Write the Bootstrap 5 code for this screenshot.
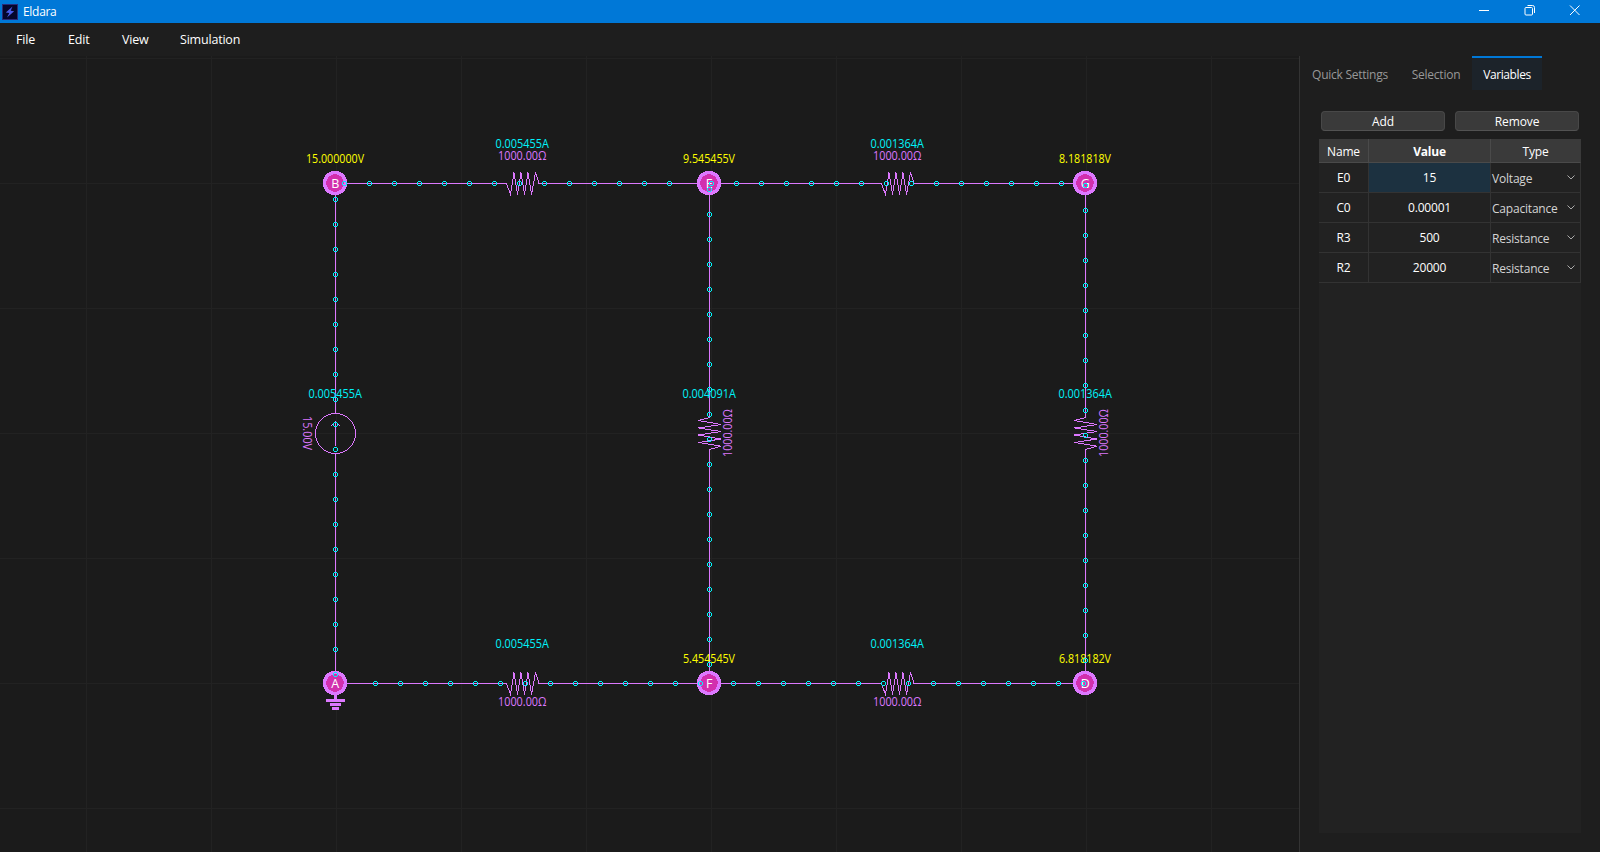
<!DOCTYPE html>
<html lang="en">
<head>
<meta charset="utf-8">
<title>Eldara</title>
<link href="https://cdn.jsdelivr.net/npm/bootstrap@5.3.0/dist/css/bootstrap.min.css" rel="stylesheet">
<style>
  body{height:852px;overflow:hidden;background:#1e1e1e;color:#fff;font:12px/16px "Open Sans","Noto Sans",sans-serif;letter-spacing:-.2px}
  .titlebar{height:23px;background:#0078d7;padding:0 1.5px 0 2px}
  .titlebar .caption{margin-left:5px;letter-spacing:-.3px}
  .winctl{width:45.5px;height:21px}
  .menubar{height:33px;font-size:12.5px;padding-left:16px}
  .menubar a{color:#fff;text-decoration:none}
  .m1{width:52px}.m2{width:54px}.m3{width:58px}
  .canvas{width:1299px;background:#1b1b1b}
  .side{width:301px;border-left:1px solid #333}
  .tabrow a{height:34px;border-top:2px solid transparent;color:#989898;text-decoration:none;padding-top:1px;letter-spacing:-.25px}
  .tabrow .t1{width:100px}.tabrow .t2{width:72px}.tabrow .t3{width:70px}
  .tabrow a.current{background:#1c232a;border-top-color:#0078d7;color:#fff}
  .tabrow a.current span{letter-spacing:-.4px}
  .tools{margin:21px 0 8px;padding:0 21px;gap:10px}
  .tools button{height:20px;border:1px solid #484848;border-bottom-color:#525252;border-radius:4px;background:#3a3a3a;color:#fff;padding:2px 0 0;line-height:16px;letter-spacing:-.1px}
  .pane{width:262px;height:694px;margin-left:19px;background:#222}
  .vars{display:grid;grid-template-columns:50px 122px 90px}
  .vars>div{height:30px;border-right:1px solid #333;border-bottom:1px solid #333;display:flex;align-items:center;justify-content:center;padding-top:1px}
  .vars>.hd{height:24px;background:#3a3a3a;border-color:#4a4a4a;padding:2px 0 0}
  .vars>.hd.end{border-right-color:#3a3a3a}
  .vars>.kind{justify-content:space-between;padding:3px 5px 0 1px;color:#d4d4d4}
  .vars>.kind svg{margin-top:-3px}
  .vars>.chosen{background:#1c3140}
  svg{display:block}
  .circuit text{letter-spacing:0}
</style>
</head>
<body class="d-flex flex-column">
<header class="titlebar d-flex align-items-center flex-shrink-0">
  <svg width="16" height="16" viewBox="0 0 16 16"><rect x=".5" y=".5" width="15" height="15" fill="#05052c" stroke="#2a2a78"/><path d="M10.5 2.5 3.800 8.500 7.300 9 5 13.500 12.200 7.300 8.700 6.700z" fill="#4a5be8"/></svg>
  <span class="caption me-auto">Eldara</span>
  <svg class="winctl" viewBox="0 0 45.5 21"><path d="M17 9.5h10" stroke="#fff"/></svg>
  <svg class="winctl" viewBox="0 0 45.5 21"><g fill="none" stroke="#fff"><rect x="17" y="6.500" width="7.500" height="7.500" rx="1"/><path d="M19.500 4.500h5q2 0 2 2v5.500"/></g></svg>
  <svg class="winctl" viewBox="0 0 45.5 21"><path d="m17 4.500 9.500 9.500m0-9.500-9.500 9.500" stroke="#fff"/></svg>
</header>
<nav class="menubar d-flex align-items-center flex-shrink-0">
  <a class="m1" href="#">File</a><a class="m2" href="#">Edit</a><a class="m3" href="#">View</a><a href="#">Simulation</a>
</nav>
<div class="d-flex flex-grow-1">
  <main class="canvas"><svg class="circuit" id="circuit" width="1299" height="796" viewBox="0 56 1299 796"></svg></main>
  <aside class="side">
    <div class="tabrow d-flex">
      <a class="t1 d-flex align-items-center justify-content-center" href="#">Quick Settings</a>
      <a class="t2 d-flex align-items-center justify-content-center" href="#">Selection</a>
      <a class="t3 current d-flex align-items-center justify-content-center" href="#"><span>Variables</span></a>
    </div>
    <div class="tools d-flex"><button class="flex-fill w-50">Add</button><button class="flex-fill w-50">Remove</button></div>
    <div class="pane"><div class="vars" id="vars">
      <div class="hd">Name</div><div class="hd fw-bold">Value</div><div class="hd end">Type</div>
    </div></div>
  </aside>
</div>
<script src="https://cdn.jsdelivr.net/npm/bootstrap@5.3.0/dist/js/bootstrap.bundle.min.js"></script>
<script>
const chevron = '<svg width="8" height="5" viewBox="0 0 8 5"><path d="M.5.500 4 4 7.500.500" fill="none" stroke="#aaa"/></svg>';
document.getElementById('vars').insertAdjacentHTML('beforeend',
  [['E0','15','Voltage'],['C0','0.00001','Capacitance'],['R3','500','Resistance'],['R2','20000','Resistance']]
  .map(([n,v,t],i)=>`<div>${n}</div><div class="${i?'':'chosen'}">${v}</div><div class="kind"><span>${t}</span>${chevron}</div>`).join(''));

const P='#dd78ff', C='#00f4fa', Y='#ffff00';
let s='<g shape-rendering="crispEdges" fill="none">';
// background grid
for(let x=86;x<1299;x+=125) s+=`<path d="M${x+.5} 56V852" stroke="#222"/>`;
for(let y=58;y<852;y+=125) s+=`<path d="M0 ${y+.5}H1299" stroke="#222"/>`;
// wires and components
const hres=(x,y)=>`H${x} l4 11 3.500-22 3.500 22 3.500-22 3.500 22 3.500-22 3.500 22 4-22 3.500 11`;
const vres=(x)=>`V417.500 l-11 3 22.500 4-22.500 3.500 22.500 3.500-22.500 3.500 22.500 4-22.500 3.500 22.500 3.700-11.500 3.300`;
s+=`<g stroke="${P}">`;
for(const y of [183.5,683.5]) s+=`<path d="M335.500 ${y}${hres(506.5,y)}H709.500${hres(881.5,y)}H1085.500"/>`;
for(const x of [709.5,1085.5]) s+=`<path d="M${x} 183.500${vres(x)}V683.500"/>`;
s+=`<path d="M335.500 183.500V413.500M335.500 453.500V683.500M335.500 422V446M331 426l4.500-4.500 4.500 4.500"/><circle cx="335.500" cy="433.500" r="20"/></g></g>`;
s+=`<path fill="${P}" d="M334 695h3v4h8v3h-19v-3h8zM330 703h11v3h-11zM332 707h7v3h-7z"/>`;
// nodes
for(const [n,x,y] of [['B',335,183],['E',709,183],['G',1085,183],['A',335,683],['F',709,683],['D',1085,683]])
  s+=`<circle cx="${x}" cy="${y}" r="10.500" fill="#d22fae" stroke="${P}" stroke-width="3.400" shape-rendering="crispEdges"/><text x="${x+.3}" y="${y+5}" text-anchor="middle" fill="#fff" font-size="12.500">${n}</text>`;
// labels: text, left, baseline, width, colour, rotation
const label=(t,x,y,w,c,r)=>{s+=`<text x="${x}" y="${y}" textLength="${w}" lengthAdjust="spacingAndGlyphs" fill="${c}" font-size="12.500"${r?` transform="rotate(${r} ${x} ${y})"`:''}>${t}</text>`};
label('15.000000V',306,163,58,Y); label('9.545455V',683,163,52,Y); label('8.181818V',1059,163,52,Y);
label('5.454545V',683,663,52,Y); label('6.818182V',1059,663,52,Y);
for(const y of [148,648]){label('0.005455A',495.5,y,53.5,C);label('0.001364A',870.5,y,53.5,C)}
label('0.005455A',308.5,398,53.5,C);label('0.004091A',682.5,398,53.5,C);label('0.001364A',1058.5,398,53.5,C);
for(const y of [160,706]){label('1000.00Ω',498,y,48.5,P);label('1000.00Ω',873,y,48.5,P)}
label('15.00V',303,416,34,P,90);label('1000.00Ω',732,457,48,P,-90);label('1000.00Ω',1108,457,48,P,-90);
// moving charges
const dot=(x,y)=>{s+=`<path d="M${x-1.5} ${y-2}h3M${x-1.5} ${y+2}h3M${x-2} ${y-1.5}v3M${x+2} ${y-1.5}v3" stroke="${C}" shape-rendering="crispEdges"/>`};
for(const [x,y,n] of [[344.5,183.5,14],[711.5,183.5,15],[375.5,683.5,14],[733.5,683.5,15]]) for(let i=0;i<n;i++) dot(x+25*i,y);
for(const [x,y] of [[335.5,199.5],[709.5,189.5],[1085.5,185.5]]) for(let i=0;i<20;i++) dot(x,y+25*i);
document.getElementById('circuit').innerHTML=s;
</script>
</body>
</html>
